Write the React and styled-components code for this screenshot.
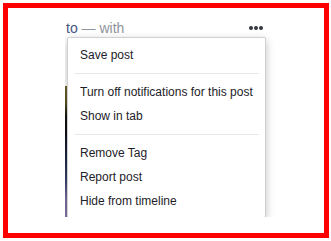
import React from "react";
import styled, { createGlobalStyle } from "styled-components";

const GlobalStyle = createGlobalStyle`
  body {
    margin: 0;
    background: #ffffff;
    font-family: "Liberation Sans", Arial, sans-serif;
  }
`;

const Frame = styled.div`
  margin: 3px;
  width: 326px;
  height: 235px;
  box-sizing: border-box;
  border: 5px solid #ff0000;
  background: #ffffff;
`;

const Clip = styled.div`
  position: relative;
  margin-left: 57px;
  width: 215px;
  height: 209px;
  overflow: hidden;
`;

const Header = styled.div`
  display: flex;
  align-items: center;
  justify-content: space-between;
  width: 197px;
  height: 18px;
  padding: 11px 5px 0 1px;
  box-sizing: content-box;
  font-size: 14px;
  line-height: 18px;
`;

const Title = styled.span`
  color: #90949c;
`;

const Strong = styled.span`
  color: #45557e;
`;

const Dots = styled.div`
  display: flex;
  gap: 1px;
  margin-top: -1px;
`;

const Dot = styled.span`
  width: 4px;
  height: 4px;
  border-radius: 50%;
  background: #33363b;
`;

const Photo = styled.div`
  margin-top: 49px;
  width: 200px;
  height: 140px;
  background: linear-gradient(
    180deg,
    #6d652a 0%,
    #5a5424 12%,
    #111111 22%,
    #0e0f16 33%,
    #1e2a48 52%,
    #3a4470 68%,
    #7a6c9c 80%,
    #8a7ab0 100%
  );
`;

const Menu = styled.div`
  position: absolute;
  left: 2px;
  top: 29px;
  width: 199px;
  box-sizing: border-box;
  padding: 5px 0 4px;
  background: #ffffff;
  border: 1px solid rgba(0, 0, 0, 0.18);
  border-radius: 2px;
  box-shadow: 0 3px 8px rgba(0, 0, 0, 0.25);
`;

const Item = styled.div`
  height: 24px;
  line-height: 24px;
  padding: 0 12px;
  font-size: 12px;
  color: #1d2129;
  white-space: nowrap;
`;

const Separator = styled.div`
  height: 1px;
  margin: 6px 6px 6px 7px;
  background: #e5e6e9;
`;

const items = [
  ["Save post"],
  ["Turn off notifications for this post", "Show in tab"],
  ["Remove Tag", "Report post", "Hide from timeline"],
];

export default function App() {
  return (
    <>
      <GlobalStyle />
      <Frame>
        <Clip>
          <Header>
            <Title>
              <Strong>to</Strong> — with
            </Title>
            <Dots>
              <Dot />
              <Dot />
              <Dot />
            </Dots>
          </Header>
          <Photo />
          <Menu>
            {items.map((group, i) => (
              <React.Fragment key={i}>
                {i > 0 && <Separator />}
                {group.map((label) => (
                  <Item key={label}>{label}</Item>
                ))}
              </React.Fragment>
            ))}
          </Menu>
        </Clip>
      </Frame>
    </>
  );
}
